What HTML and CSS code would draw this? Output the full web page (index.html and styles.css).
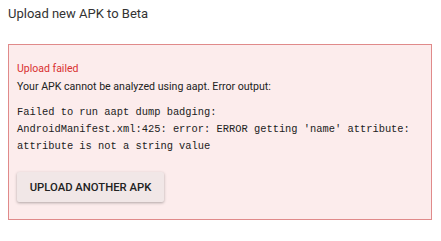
FILE: index.html
```html
<!DOCTYPE html>
<html lang="en">
  <head>
    <meta charset="UTF-8" />
    <title>Upload new APK to Beta</title>
    <link rel="stylesheet" href="styles.css">
  </head>
  <body>
    <h1 class="title">Upload new APK to Beta</h1>
    <div class="error-box">
      <p class="error-title">Upload failed</p>
      <p class="error-desc">Your APK cannot be analyzed using aapt. Error output:</p>
      <pre class="error-output">Failed to run aapt dump badging:
AndroidManifest.xml:425: error: ERROR getting 'name' attribute:
attribute is not a string value</pre>
      <button type="button" class="retry-btn">Upload another APK</button>
    </div>
  </body>
</html>
```
FILE: styles.css
```css
body {
  margin: 8px;
  font-family: Roboto, "Liberation Sans", sans-serif;
  color: #333;
  background-color: #fff;
}

.title {
  margin: 0;
  font-size: 13px;
  font-weight: 400;
  line-height: 12px;
  color: #333;
}

.error-box {
  margin-top: 24px;
  box-sizing: border-box;
  width: 424px;
  height: 176px;
  padding: 17px 8px 0 8px;
  background-color: #fcecec;
  border: 1px solid #e08a8a;
}

.error-title {
  margin: 0;
  font-size: 10.5px;
  line-height: 14px;
  color: #d93030;
}

.error-desc {
  margin: 4px 0 0;
  font-size: 10.6px;
  line-height: 14px;
  color: #222;
}

.error-output {
  margin: 10px 0 0;
  font-family: "Liberation Mono", monospace;
  font-size: 10.4px;
  line-height: 17px;
  color: #222;
}

.retry-btn {
  display: block;
  margin-top: 17px;
  width: 147px;
  height: 30px;
  padding: 0;
  font-family: Roboto, "Liberation Sans", sans-serif;
  font-size: 11.3px;
  font-weight: 500;
  text-transform: uppercase;
  color: #222;
  background-color: #f1e7e7;
  border: none;
  border-radius: 2px;
  box-shadow: 0 1px 3px rgba(0, 0, 0, 0.3);
  cursor: pointer;
}
```
